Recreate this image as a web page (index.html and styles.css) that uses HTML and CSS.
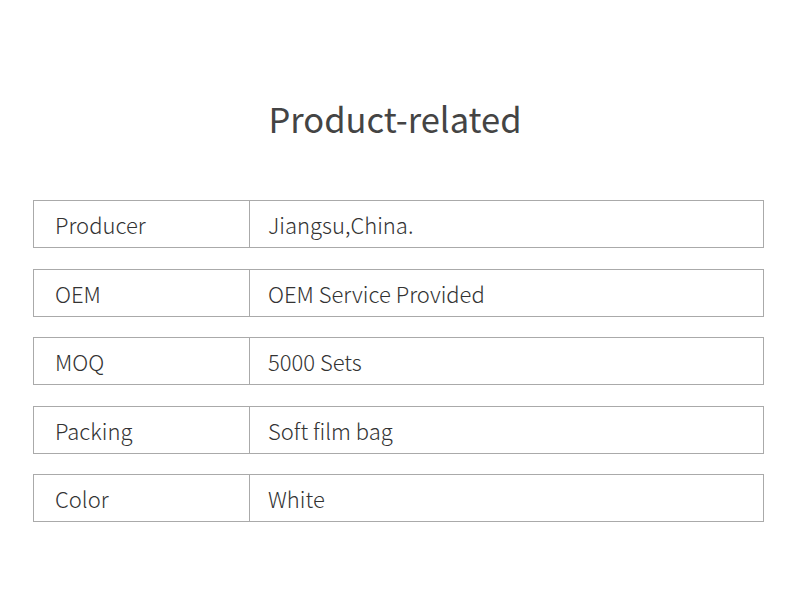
FILE: index.html
```html
<!DOCTYPE html>
<html>
<head>
<meta charset="utf-8">
<link rel="stylesheet" href="styles.css">
</head>
<body>
<div class="page">
  <h1 class="title">Product-related</h1>
  <div class="rows">
    <div class="row"><div class="label">Producer</div><div class="value">Jiangsu,China.</div></div>
    <div class="row"><div class="label">OEM</div><div class="value">OEM Service Provided</div></div>
    <div class="row"><div class="label">MOQ</div><div class="value">5000 Sets</div></div>
    <div class="row"><div class="label">Packing</div><div class="value">Soft film bag</div></div>
    <div class="row"><div class="label">Color</div><div class="value">White</div></div>
  </div>
</div>
</body>
</html>
```

FILE: styles.css
```css
html, body {
  margin: 0;
  padding: 0;
  background: #fff;
}
.page {
  width: 790px;
  height: 589px;
  padding-top: 94px;
  box-sizing: border-box;
  font-family: "Noto Sans CJK SC", "Noto Sans", sans-serif;
}
.title {
  margin: 0;
  text-align: center;
  font-size: 34.5px;
  font-weight: 400;
  color: #444;
  line-height: 48px;
}
.rows {
  margin: 58px 0 0 33px;
  width: 731px;
  display: flex;
  flex-direction: column;
  gap: 20.5px;
}
.row {
  display: flex;
  height: 48px;
  box-sizing: border-box;
  border: 1px solid #aaa;
  color: #333;
  font-size: 22px;
  font-weight: 300;
}
.label {
  width: 216px;
  flex: none;
  box-sizing: border-box;
  border-right: 1px solid #aaa;
  padding-left: 21px;
  display: flex;
  align-items: center;
}
.value {
  flex: 1;
  padding-left: 18px;
  display: flex;
  align-items: center;
}
```
